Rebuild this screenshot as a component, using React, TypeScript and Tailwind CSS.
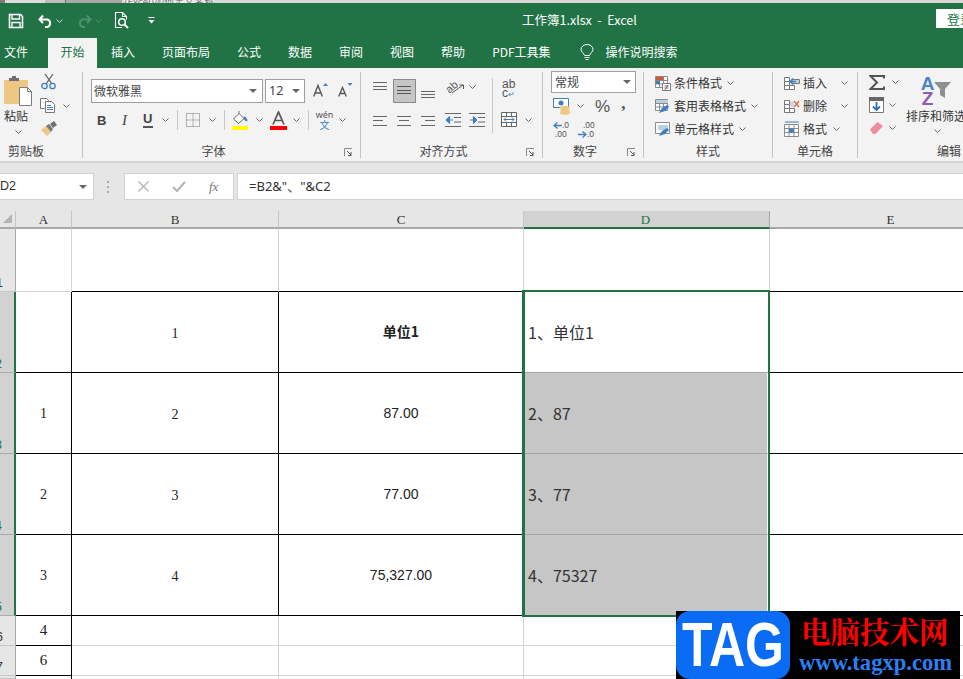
import React from "react";

const CJK = "font-['Noto_Sans_CJK_SC','Noto_Sans',sans-serif]";

function Chev({ className = "", color = "#666" }: { className?: string; color?: string }) {
  return (
    <svg width="7" height="4" viewBox="0 0 7 4" className={"shrink-0 " + className}>
      <path d="M.5.5 3.5 3.5 6.5.5" fill="none" stroke={color} strokeWidth="1" />
    </svg>
  );
}

function Tri({ className = "" }: { className?: string }) {
  return (
    <svg width="8" height="4" viewBox="0 0 8 4" className={"shrink-0 " + className}>
      <path d="M0 0h8L4 4z" fill="#666" />
    </svg>
  );
}

function Launcher() {
  return (
    <svg width="9" height="9" viewBox="0 0 9 9" className="shrink-0">
      <path d="M.5 8V.5H8" fill="none" stroke="#888" />
      <path d="M3 3l4 4M7 4v3.500H4" fill="none" stroke="#555" />
    </svg>
  );
}

function Lines({ rows, w = 15, h = 16, box = false, className = "" }: { rows: number[][]; w?: number; h?: number; box?: boolean; className?: string }) {
  return (
    <svg width={w} height={h} viewBox={`0 0 ${w} ${h}`} className={"shrink-0 " + className}>
      {rows.map((r, i) => (
        <path key={i} d={`M${r[0]} ${r[2]}.5H${r[1]}`} stroke={box ? "#555" : "#666"} />
      ))}
    </svg>
  );
}

function Sep() {
  return <div className="w-px h-[86px] mt-[4px] bg-[#c2c2c2] shrink-0" />;
}

function Group({ w, label, pad = "", launcher = false, children }: { w: string; label: string; pad?: string; launcher?: boolean; children: React.ReactNode }) {
  return (
    <div className={"flex flex-col shrink-0 overflow-hidden " + w}>
      <div className="h-[74px]">{children}</div>
      <div className="flex h-[18px] items-center text-[12px] leading-none text-[#444]">
        <div className={"flex-1 text-center whitespace-nowrap " + pad}>{label}</div>
        {launcher && (
          <div className="w-[16px] mt-[3px] flex">
            <Launcher />
          </div>
        )}
      </div>
    </div>
  );
}

function TabItem({ children, ml = "" }: { children: React.ReactNode; ml?: string }) {
  return <div className={"whitespace-nowrap " + ml}>{children}</div>;
}

function GridIcon({ children, w = 16, h = 16 }: { children?: React.ReactNode; w?: number; h?: number }) {
  return (
    <svg width={w} height={h} viewBox="0 0 16 16" className="shrink-0">
      {children}
    </svg>
  );
}

function StyleRow({ icon, text, gap = "ml-[3px]", chev = "ml-[5px]" }: { icon: React.ReactNode; text: string; gap?: string; chev?: string }) {
  return (
    <div className="flex items-center h-[23px]">
      {icon}
      <span className={"text-[12px] leading-none whitespace-nowrap text-[#333] " + gap}>{text}</span>
      <Chev className={chev} />
    </div>
  );
}

const tableLines = (
  <path d="M.5 1.500h12v11h-12zM.5 5.500h12M.5 9h12M4.500 1.500v11M8.500 1.500v11" fill="#fff" stroke="#8a8a8a" />
);

function TopStrip() {
  return (
    <div className="h-[3px] bg-[#d9d9d9] shrink-0 flex overflow-hidden">
      <div className="w-[5px] bg-[#7a7a7a]" />
      <div className="w-[40px] bg-[#dcdcdc]" />
      <div className="w-[20px] bg-[#bdbdbd]" />
      <div className="w-px bg-[#5f7f78]" />
      <div className="w-[56px] bg-[#a9a9a9]" />
      <div className="w-[90px] ml-[2px] bg-[#ececec] flex items-start overflow-hidden">
        <span className="text-[10px] leading-[3px] text-[#777] whitespace-nowrap">{"{Excel}如何定义名称"}</span>
      </div>
    </div>
  );
}

function TopBar() {
  return (
    <div className="h-[35px] flex items-center shrink-0 text-white">
      <svg width="16" height="16" viewBox="0 0 16 16" className="ml-[8px] shrink-0">
        <path d="M1.500 1.500h11l2 2v11h-13z" fill="none" stroke="#fff" strokeWidth="1.600" />
        <path d="M4 1.500v4.500h7.500v-4.500M4 14.500v-5h8v5" fill="none" stroke="#fff" strokeWidth="1.400" />
      </svg>
      <svg width="15" height="14" viewBox="0 0 15 14" className="ml-[14px] shrink-0">
        <path d="M1.500 5.500h8a4 4 0 0 1 0 7.500H7M5 1.500 1.500 5.500 5 9" fill="none" stroke="#fff" strokeWidth="2" />
      </svg>
      <Chev className="ml-[3px]" color="#cfe3d8" />
      <svg width="15" height="14" viewBox="0 0 15 14" className="ml-[14px] shrink-0">
        <path d="M13.500 5.500h-8a4 4 0 0 0 0 7.500H8M10 1.500 13.500 5.500 10 9" fill="none" stroke="#4d9170" strokeWidth="2" />
      </svg>
      <Chev className="ml-[3px]" color="#4d9170" />
      <svg width="16" height="17" viewBox="0 0 16 17" className="ml-[12px] shrink-0">
        <path d="M8 15.500H1.500V.500h7l4 4v3M8.500.500v4h4" fill="none" stroke="#fff" strokeWidth="1.100" />
        <circle cx="8" cy="10" r="3.300" fill="none" stroke="#fff" strokeWidth="1.500" />
        <path d="M10.500 12.500 14 16" stroke="#fff" strokeWidth="1.800" />
      </svg>
      <svg width="7" height="7" viewBox="0 0 7 7" className="ml-[18px] shrink-0">
        <path d="M.5 .5h6" stroke="#fff" />
        <path d="M.5 3h6L3.500 6.500z" fill="#fff" />
      </svg>
      <div className={"ml-[367px] text-[12.500px] leading-none whitespace-pre " + CJK}>工作簿1.xlsx  -  Excel</div>
      <div className="ml-auto w-[27px] h-[19px] bg-white overflow-hidden pl-[11px] text-[13px] leading-[19px] whitespace-nowrap text-[#217346] mb-[5px]">登录</div>
    </div>
  );
}

function Tabs() {
  return (
    <div className="h-[30px] flex items-start leading-[27px] text-[12px] text-white shrink-0">
      <TabItem ml="ml-[4px]">文件</TabItem>
      <div className="ml-[20px] w-[49px] h-[30px] bg-[#f3f3f3] text-[#217346] text-center">开始</div>
      <TabItem ml="ml-[14px]">插入</TabItem>
      <TabItem ml="ml-[27px]">页面布局</TabItem>
      <TabItem ml="ml-[27px]">公式</TabItem>
      <TabItem ml="ml-[27px]">数据</TabItem>
      <TabItem ml="ml-[27px]">审阅</TabItem>
      <TabItem ml="ml-[27px]">视图</TabItem>
      <TabItem ml="ml-[27px]">帮助</TabItem>
      <TabItem ml="ml-[27px]">PDF工具集</TabItem>
      <svg width="14" height="17" viewBox="0 0 14 17" className="ml-[29px] mt-[6px] shrink-0">
        <path d="M4.500 11.500C4 9 1 8 1 5.500a6 5 0 0 1 12 0C13 8 10 9 9.500 11.500zM4.500 13.500h5M5.500 15.500h3" fill="none" stroke="#fff" />
      </svg>
      <TabItem ml="ml-[12px]">操作说明搜索</TabItem>
    </div>
  );
}

function Clipboard() {
  return (
    <Group w="w-[82px]" label="剪贴板" pad="pl-[8px] pr-[38px]">
      <div className="flex">
        <div className="w-[40px] flex flex-col pl-[4px] shrink-0">
          <svg width="29" height="30" viewBox="0 0 29 30" className="mt-[8px]">
            <rect x="0" y="4" width="24" height="24" rx="1" fill="#eec883" />
            <path d="M5 5V2h3V0h4v2h3v3z" fill="#6f6f6f" />
            <path d="M15.500 11.500h8l4 4v14h-12z" fill="#fff" stroke="#7d7d7d" />
            <path d="M23.500 11.500v4h4" fill="none" stroke="#7d7d7d" />
          </svg>
          <div className="text-[12px] leading-none mt-[4px] text-[#333] whitespace-nowrap">粘贴</div>
          <Chev className="ml-[11px] mt-[8px]" />
        </div>
        <div className="flex flex-col pt-[6px]">
          <svg width="16" height="16" viewBox="0 0 16 16" className="ml-px">
            <path d="M4 0l7 10M12 0 5 10" stroke="#666" strokeWidth="1.300" />
            <circle cx="3.500" cy="12" r="2.700" fill="none" stroke="#3f7fbf" strokeWidth="1.300" />
            <circle cx="11.500" cy="12" r="2.700" fill="none" stroke="#3f7fbf" strokeWidth="1.300" />
          </svg>
          <div className="flex items-center mt-[8px]">
            <svg width="16" height="15" viewBox="0 0 16 15">
              <path d="M.5.500h6l2 2v2M.5.500v10h4" fill="#fff" stroke="#777" />
              <path d="M5.500 3.500h6l3 3v8h-9z" fill="#fff" stroke="#777" />
              <path d="M7 7.500h4M7 9.500h6M7 11.500h6" stroke="#4a7fb5" />
            </svg>
            <Chev className="ml-[7px]" />
          </div>
          <svg width="17" height="15" viewBox="0 0 17 15" className="mt-[8px]">
            <path d="M1 9l5-4 5 6-4 4z" fill="#eec883" />
            <path d="M6 5l3-2 4 5-2 3z" fill="#777" />
            <path d="M10 3l4-3 3 4-4 3z" fill="#6f6f6f" />
          </svg>
        </div>
      </div>
    </Group>
  );
}

function FontGroup() {
  return (
    <Group w="w-[277px]" label="字体" launcher>
      <div className="flex pt-[11px] pl-[8px]">
        <div className="w-[172px] h-[24px] bg-white border border-[#9f9f9f] flex items-center pl-[2px] pr-[5px] text-[12px] text-[#444]">
          <span className="flex-1">微软雅黑</span>
          <Tri />
        </div>
        <div className="ml-[2px] w-[40px] h-[24px] bg-white border border-[#9f9f9f] flex items-center pl-[3px] pr-[4px] text-[12.500px] text-[#444]">
          <span className={"flex-1 font-['Noto_Sans',sans-serif]"}>12</span>
          <Tri />
        </div>
        <svg width="16" height="14" viewBox="0 0 16 14" className="ml-[8px] mt-[4px] shrink-0">
          <path d="M.7 13.500 5 2.500l4.300 11M2.500 10h5" fill="none" stroke="#555" strokeWidth="1.400" />
          <path d="M10 3l2.500-3L15 3z" fill="#4a7fb5" />
        </svg>
        <svg width="16" height="14" viewBox="0 0 16 14" className="ml-[8px] mt-[4px] shrink-0">
          <path d="M1.700 13.500 5.500 4.500l3.800 9M3 10.500h5" fill="none" stroke="#555" strokeWidth="1.300" />
          <path d="M10.500 0l2.500 3 2.500-3z" fill="#4a7fb5" />
        </svg>
      </div>
      <div className="flex items-center h-[20px] mt-[7px] text-[#444]">
        <span className="ml-[14px] w-[10px] font-['Liberation_Sans',sans-serif] font-bold text-[13px] leading-none">B</span>
        <span className="ml-[15px] w-[8px] font-['Liberation_Serif',serif] italic text-[15px] leading-none">I</span>
        <span className="ml-[13px] w-[10px] font-['Liberation_Sans',sans-serif] font-bold text-[13px] leading-[14px] border-b-2 border-[#555] h-[16px]">U</span>
        <Chev className="ml-[9px]" />
        <div className="ml-[8px] w-px h-[20px] bg-[#c6c6c6]" />
        <svg width="14" height="14" viewBox="0 0 14 14" className="ml-[8px] shrink-0">
          <path d="M.5.500h13v13H.5zM7 .5v13M.5 7h13" fill="none" stroke="#777" strokeDasharray="1 1" />
        </svg>
        <Chev className="ml-[9px]" />
        <div className="ml-[8px] w-px h-[20px] bg-[#c6c6c6]" />
        <svg width="17" height="19" viewBox="0 0 17 19" className="ml-[7px] shrink-0">
          <path d="M1.500 8 7 2.500l5 5-5.500 5z" fill="#fff" stroke="#666" />
          <path d="M7 2.500V0M12 6c2 0 3 2 3 4-2 0-3-2-3-4z" fill="#4a7fb5" stroke="#4a7fb5" />
          <rect x="0" y="15" width="16" height="4" fill="#ffff00" />
        </svg>
        <Chev className="ml-[7px]" />
        <svg width="17" height="19" viewBox="0 0 17 19" className="ml-[7px] shrink-0">
          <path d="M3 13.500 8.500 1l5.500 12.500M5 9.500h7" fill="none" stroke="#555" strokeWidth="1.700" />
          <rect x="0" y="15" width="17" height="4" fill="#ff0000" />
        </svg>
        <Chev className="ml-[6px]" />
        <div className="ml-[8px] w-px h-[20px] bg-[#c6c6c6]" />
        <div className="ml-[8px] w-[15px] flex flex-col items-center leading-none">
          <span className="text-[9px] leading-[10px] text-[#555] font-['Noto_Sans',sans-serif]">wén</span>
          <span className="text-[10px] leading-[10px] text-[#3f7fbf]">文</span>
        </div>
        <Chev className="ml-[7px]" />
      </div>
    </Group>
  );
}

function AlignGroup() {
  return (
    <Group w="w-[181px]" label="对齐方式" launcher>
      <div className="flex">
        <div className="w-[131px] shrink-0 pl-[12px] pt-[11px]">
          <div className="flex items-center h-[24px]">
            <Lines rows={[[0, 14, 3], [0, 14, 7], [0, 14, 10]]} h={24} />
            <div className="ml-[5px] w-[23px] h-[24px] bg-[#c6c6c6] border border-[#8a8a8a] flex items-center justify-center shrink-0">
              <Lines rows={[[0, 14, 3], [0, 14, 7], [0, 14, 10]]} box />
            </div>
            <Lines rows={[[0, 14, 12], [0, 14, 15], [0, 14, 18]]} h={24} className="ml-[5px]" />
            <svg width="25" height="16" viewBox="0 0 25 16" className="ml-[10px] mb-[8px] mt-[-3px] shrink-0">
              <text x="1" y="13" fontSize="11" fill="#555" transform="rotate(-42 6 11)" fontFamily="Liberation Sans">ab</text>
              <path d="M6 15 17 7M13.500 7H17.500V11" fill="none" stroke="#555" />
            </svg>
            <Chev className="ml-[-2px] mb-[8px]" />
          </div>
          <div className="flex items-center h-[16px] mt-[9px]">
            <Lines rows={[[0, 14, 4], [0, 10, 8], [0, 14, 13]]} />
            <Lines rows={[[0, 14, 4], [2, 12, 8], [0, 14, 13]]} className="ml-[9px]" />
            <Lines rows={[[0, 14, 4], [4, 14, 8], [0, 14, 13]]} className="ml-[9px]" />
            <svg width="17" height="14" viewBox="0 0 17 14" className="ml-[9px] shrink-0">
              <path d="M0 .5h16M9 4.500h7M9 9h7M0 13.500h16" stroke="#666" />
              <path d="M8 7H2M4.500 3.500 1 7l3.500 3.500z" fill="#3f7fbf" stroke="#3f7fbf" />
            </svg>
            <svg width="17" height="14" viewBox="0 0 17 14" className="ml-[7px] shrink-0">
              <path d="M0 .5h16M9 4.500h7M9 9h7M0 13.500h16" stroke="#666" />
              <path d="M1 7h6M4.500 3.500 8 7l-3.500 3.500z" fill="#3f7fbf" stroke="#3f7fbf" />
            </svg>
          </div>
        </div>
        <div className="w-px h-[55px] mt-[10px] bg-[#c6c6c6] shrink-0" />
        <div className="flex flex-col pl-[8px] pt-[12px]">
          <div className="flex flex-col ml-[1px] h-[20px] text-[#555] font-['Liberation_Sans',sans-serif] text-[12px]">
            <span className="leading-[9px]">ab</span>
            <span className="leading-[9px]">
              c<span className="text-[#3f7fbf] text-[8px]">↵</span>
            </span>
          </div>
          <div className="flex items-center mt-[12px]">
            <svg width="16" height="15" viewBox="0 0 16 15" className="shrink-0">
              <path d="M.5.500h15v14H.5zM.5 4.500h15M.5 10.500h15M5.500.5v4M10.500.5v4M5.500 10.500v4M10.500 10.500v4" fill="#fff" stroke="#666" />
              <path d="M3 7.500h10M5 5.500l-2 2 2 2M11 5.500l2 2-2 2" fill="none" stroke="#3f7fbf" />
            </svg>
            <Chev className="ml-[8px]" />
          </div>
        </div>
      </div>
    </Group>
  );
}

function NumberGroup() {
  return (
    <Group w="w-[100px]" label="数字" launcher>
      <div className="ml-[8px] mt-[3px] w-[85px] h-[22px] bg-white border border-[#9f9f9f] flex items-center pl-[3px] pr-[4px] text-[12px] text-[#444]">
        <span className="flex-1">常规</span>
        <Tri />
      </div>
      <div className="flex items-center h-[20px] mt-[3px] ml-[10px]">
        <svg width="18" height="17" viewBox="0 0 18 17" className="shrink-0">
          <path d="M.5.500h15v9H.5z" fill="#fff" stroke="#3f7fbf" />
          <circle cx="8" cy="5" r="2.500" fill="#3f7fbf" />
          <ellipse cx="12" cy="9.500" rx="5" ry="1.800" fill="#eec883" />
          <ellipse cx="12" cy="12.500" rx="5" ry="1.800" fill="#eec883" />
          <ellipse cx="12" cy="15" rx="5" ry="1.800" fill="#eec883" />
        </svg>
        <Chev className="ml-[6px]" />
        <span className="ml-[11px] text-[17px] leading-none text-[#555] font-['Liberation_Sans',sans-serif]">%</span>
        <span className="ml-[11px] text-[17px] font-bold leading-none text-[#555] font-['Liberation_Serif',serif] mt-[-5px]">,</span>
      </div>
      <div className="flex items-center mt-[5px] ml-[10px] text-[8.500px] leading-[8px] text-[#555] font-['Liberation_Sans',sans-serif]">
        <div className="w-[18px]">
          <div className="flex items-center">
            <svg width="9" height="7" viewBox="0 0 9 7"><path d="M9 3.500H2M4.500.5 1 3.500l3.500 3" fill="none" stroke="#3f7fbf" strokeWidth="1.300" /></svg>.0
          </div>
          <div className="pl-[2px] mt-[1px]">.00</div>
        </div>
        <div className="w-[18px] ml-[7px]">
          <div className="pl-[5px]">.00</div>
          <div className="flex items-center mt-[1px]">
            <svg width="9" height="7" viewBox="0 0 9 7"><path d="M0 3.500h7M4.500.5 8 3.500l-3.500 3" fill="none" stroke="#3f7fbf" strokeWidth="1.300" /></svg>.0
          </div>
        </div>
      </div>
    </Group>
  );
}

function StylesGroup() {
  return (
    <Group w="w-[128px]" label="样式">
      <div className="pl-[11px] pt-[3px]">
        <StyleRow
          icon={
            <GridIcon>
              {tableLines}
              <path d="M1 2h7v3H1z" fill="#d9542c" />
              <path d="M1 6h4v3H1z" fill="#3f7fbf" />
              <path d="M7.500 8.500h8v7h-8z" fill="#fff" stroke="#777" />
              <path d="M9.500 11h4M9.500 13h4M10 15l3-5" stroke="#555" strokeWidth=".8" />
            </GridIcon>
          }
          text="条件格式"
        />
        <StyleRow
          icon={
            <GridIcon>
              {tableLines}
              <path d="M1 2h12v3H1z" fill="#bcd0e3" />
              <path d="M4 15l3-5 5-3 2 2-4 4z" fill="#3f7fbf" />
            </GridIcon>
          }
          text="套用表格格式"
        />
        <StyleRow
          icon={
            <GridIcon>
              <path d="M.5 1.500h14v11H.5z" fill="#fff" stroke="#8a8a8a" />
              <path d="M3 4h10v5H3z" fill="#bcd0e3" />
              <path d="M4 15l3-5 5-3 2 2-4 4z" fill="#3f7fbf" />
            </GridIcon>
          }
          text="单元格样式"
        />
      </div>
    </Group>
  );
}

function CellsGroup() {
  const grid = "M.5 2.500h5v4h-5zM.5 6.500h5v4h-5zM.5 10.500h5v4h-5zM5.500 10.500h5v4h-5z";
  return (
    <Group w="w-[84px]" label="单元格">
      <div className="pl-[11px] pt-[3px]">
        <StyleRow
          icon={
            <GridIcon>
              <path d={grid} fill="#fff" stroke="#777" />
              <path d="M8 4.500h7.500v4H8z" fill="#bcd0e3" stroke="#777" />
              <path d="M12 6.500H6.500M9 3.500l-3 3 3 3" fill="none" stroke="#3f7fbf" strokeWidth="1.300" />
            </GridIcon>
          }
          text="插入"
          chev="ml-[14px]"
        />
        <StyleRow
          icon={
            <GridIcon>
              <path d={grid} fill="#fff" stroke="#777" />
              <path d="M6.500 3.500h3v5h-3z" fill="#bcd0e3" />
              <path d="M10 3l5 6M15 3l-5 6" stroke="#e2704f" strokeWidth="1.500" />
            </GridIcon>
          }
          text="删除"
          chev="ml-[14px]"
        />
        <StyleRow
          icon={
            <GridIcon>
              <path d="M.5 3.500h14v12H.5zM.5 7.500h14M.5 11.500h14M5 3.500v12M10 3.500v12" fill="#fff" stroke="#8a8a8a" />
              <path d="M5 7.500h5v4H5z" fill="#3f7fbf" />
              <path d="M1 1h14" stroke="#3f7fbf" strokeWidth="1" />
            </GridIcon>
          }
          text="格式"
          chev="ml-[6px]"
        />
      </div>
    </Group>
  );
}

function EditGroup() {
  return (
    <div className="flex flex-col flex-1 overflow-hidden">
      <div className="h-[74px] flex">
        <div className="flex flex-col pl-[11px] pt-[6px] w-[48px] shrink-0">
          <div className="flex items-center h-[16px]">
            <svg width="16" height="15" viewBox="0 0 16 15" className="shrink-0">
              <path d="M15 3.500V1H1.500L8 7.500 1.500 14H15v-2.500" fill="none" stroke="#555" strokeWidth="2" />
            </svg>
            <Chev className="ml-[7px]" />
          </div>
          <div className="flex items-center h-[16px] mt-[7px]">
            <svg width="15" height="16" viewBox="0 0 15 16" className="shrink-0">
              <path d="M.5.500h14v15H.5z" fill="#fff" stroke="#777" />
              <path d="M0 0h15v4H0z" fill="#666" />
              <path d="M7.500 5v8M4 9.500l3.500 3.500L11 9.500" fill="none" stroke="#2d6fb0" strokeWidth="1.800" />
            </svg>
            <Chev className="ml-[5px]" />
          </div>
          <div className="flex items-center h-[16px] mt-[7px]">
            <svg width="15" height="14" viewBox="0 0 15 14" className="shrink-0">
              <path d="M1 8.500 8.500 1 14 5l-7.500 8H4z" fill="#ee8d9c" />
            </svg>
            <Chev className="ml-[5px]" />
          </div>
        </div>
        <div className="flex flex-col w-[60px] shrink-0 overflow-hidden">
          <div className="flex mt-[8px] pl-[15px] h-[30px]">
            <div className="flex flex-col items-center font-['Liberation_Sans',sans-serif] font-bold text-[19px] leading-[15px] w-[13px]">
              <span className="text-[#4a86c5]">A</span>
              <span className="text-[#8e5cb5]">Z</span>
            </div>
            <svg width="17" height="17" viewBox="0 0 17 17" className="mt-[6px] shrink-0">
              <path d="M0 0h17l-6 7v9l-5-3V7z" fill="#8f8f8f" />
            </svg>
          </div>
          <div className="text-[12px] leading-none mt-[4px] whitespace-nowrap text-[#333]">排序和筛选</div>
          <Chev className="ml-[28px] mt-[7px]" />
        </div>
      </div>
      <div className="flex h-[18px] items-center text-[12px] leading-none text-[#444] pl-[79px] whitespace-nowrap">编辑</div>
    </div>
  );
}

function Ribbon() {
  return (
    <div className="h-[95px] bg-[#f3f3f3] border-b-2 border-[#d4d4d4] flex shrink-0">
      <Clipboard />
      <Sep />
      <FontGroup />
      <Sep />
      <AlignGroup />
      <Sep />
      <NumberGroup />
      <Sep />
      <StylesGroup />
      <Sep />
      <CellsGroup />
      <Sep />
      <EditGroup />
    </div>
  );
}

function FormulaBar() {
  return (
    <div className="h-[48px] bg-[#e6e6e6] flex shrink-0 pt-[10px]">
      <div className="w-[94px] h-[27px] bg-white border border-l-0 border-[#d2d2d2] flex items-center pr-[6px] font-['Liberation_Sans',sans-serif] text-[12.500px] text-[#333]">
        <span className="flex-1 whitespace-nowrap">D2</span>
        <Tri />
      </div>
      <div className="ml-[13px] w-[3px] h-[27px] flex flex-col justify-center gap-[3px] mr-[14px]">
        <div className="w-[2px] h-[2px] bg-[#aaa]" />
        <div className="w-[2px] h-[2px] bg-[#aaa]" />
        <div className="w-[2px] h-[2px] bg-[#aaa]" />
      </div>
      <div className="w-[110px] h-[27px] bg-white border border-[#d2d2d2] flex items-center pl-[13px]">
        <svg width="11" height="11" viewBox="0 0 11 11" className="shrink-0">
          <path d="M.5.500l10 10M10.500.5l-10 10" stroke="#b4b4b4" strokeWidth="1.400" />
        </svg>
        <svg width="14" height="11" viewBox="0 0 14 11" className="ml-[23px] shrink-0">
          <path d="M1 6l4 4 8-9" fill="none" stroke="#b4b4b4" strokeWidth="2" />
        </svg>
        <span className="ml-[23px] font-['Liberation_Serif',serif] italic text-[13px] leading-none text-[#777]">fx</span>
      </div>
      <div className="ml-[3px] flex-1 h-[27px] bg-white border border-r-0 border-[#d2d2d2] flex items-center pl-[11px] text-[13px] text-[#333] font-['Noto_Sans','Noto_Sans_CJK_SC',sans-serif] whitespace-nowrap">
        =B2&amp;"、"&amp;C2
      </div>
    </div>
  );
}

function Head({ children, sel = false, last = false }: { children?: React.ReactNode; sel?: boolean; last?: boolean }) {
  return (
    <div
      className={
        "flex items-center justify-center text-[13px] font-['Liberation_Serif',serif] leading-none " +
        (sel
          ? "bg-[#d2d2d2] text-[#217346] border-b-2 border-b-[#217346] border-r border-r-[#a8a8a8] pr-[2px]"
          : "bg-[#e6e6e6] text-[#333] border-b-2 border-b-[#a8a8a8] " + (last ? "" : "border-r border-r-[#c6c6c6]"))
      }
    >
      {children}
    </div>
  );
}

function RowHead({ n, sel = false }: { n: number; sel?: boolean }) {
  return (
    <div
      className={
        "flex items-end justify-end pr-[12px] overflow-hidden text-[13px] leading-[16px] font-['Liberation_Sans',sans-serif] " +
        (sel
          ? "bg-[#d2d2d2] text-[#217346] border-r-2 border-r-[#217346] border-b border-b-[#ababab]"
          : "bg-[#e6e6e6] text-[#333] border-r border-r-[#a8a8a8] border-b border-b-[#c6c6c6]")
      }
    >
      {n}
    </div>
  );
}

function Cell({ children, className = "" }: { children?: React.ReactNode; className?: string }) {
  return <div className={"flex items-center justify-center bg-white text-[#222] " + className}>{children}</div>;
}

const LL = "border-r border-b border-[#d4d4d4]";
const BB = "border-r border-b border-black";
const NUM = "font-['Liberation_Sans',sans-serif] text-[14px]";
const ANUM = "font-['Liberation_Serif',serif] text-[14px]";
const BNUM = "font-['Liberation_Serif',serif] text-[14px] pt-[2px]";
const DT = "!justify-start pl-[4px] pb-px text-[16px] text-[#333] " + CJK;
const DG = " !bg-[#c6c6c6] border-b border-b-[#a4a4a4] border-r-[3px] border-r-white";

function Sheet() {
  return (
    <div className="relative flex-1 overflow-hidden">
      <div className="grid h-full grid-cols-[16px_56px_207px_245px_246px_241px] grid-rows-[18px_63px_81px_81px_81px_81px_30px_30px_1fr]">
        <div className="bg-[#e6e6e6] border-b-2 border-b-[#a8a8a8] border-r border-r-[#c6c6c6] flex items-end justify-end pr-[3px] pb-[4px]">
          <svg width="9" height="9" viewBox="0 0 9 9"><path d="M9 0v9H0z" fill="#b4b4b4" /></svg>
        </div>
        <Head>A</Head>
        <Head>B</Head>
        <Head>C</Head>
        <Head sel>D</Head>
        <Head last>E</Head>

        <RowHead n={1} />
        <Cell className={LL} />
        <Cell className="border-r border-r-[#d4d4d4] border-b border-b-black" />
        <Cell className="border-r border-r-[#d4d4d4] border-b border-b-black" />
        <Cell className="border-r border-r-[#d4d4d4] border-b border-b-black" />
        <Cell className="border-b border-b-black" />

        <RowHead n={2} sel />
        <Cell className={BB} />
        <Cell className={BB + " " + BNUM}>1</Cell>
        <Cell className={BB + " font-bold text-[14px] pb-[2px] " + CJK}>单位1</Cell>
        <Cell className={DT + " border-b border-b-[#a4a4a4]"}>1、单位1</Cell>
        <Cell className="border-b border-b-black" />

        <RowHead n={3} sel />
        <Cell className={BB + " " + ANUM}>1</Cell>
        <Cell className={BB + " " + BNUM}>2</Cell>
        <Cell className={BB + " " + NUM}>87.00</Cell>
        <Cell className={DT + DG}>2、87</Cell>
        <Cell className="border-b border-b-black" />

        <RowHead n={4} sel />
        <Cell className={BB + " " + ANUM}>2</Cell>
        <Cell className={BB + " " + BNUM}>3</Cell>
        <Cell className={BB + " " + NUM}>77.00</Cell>
        <Cell className={DT + DG}>3、77</Cell>
        <Cell className="border-b border-b-black" />

        <RowHead n={5} sel />
        <Cell className={BB + " " + ANUM}>3</Cell>
        <Cell className={BB + " " + BNUM}>4</Cell>
        <Cell className={BB + " " + NUM}>75,327.00</Cell>
        <Cell className={DT + DG}>4、75327</Cell>
        <Cell className="border-b border-b-black" />

        <RowHead n={6} />
        <Cell className={BB + " " + ANUM + " text-[15px]"}>4</Cell>
        <Cell className={LL} />
        <Cell className={LL} />
        <Cell className={LL} />
        <Cell className="border-b border-b-[#d4d4d4]" />

        <RowHead n={7} />
        <Cell className={BB + " " + ANUM + " text-[15px]"}>6</Cell>
        <Cell className={LL} />
        <Cell className={LL} />
        <Cell className={LL} />
        <Cell className="border-b border-b-[#d4d4d4]" />

        <RowHead n={8} />
        <Cell className="border-r border-black" />
        <Cell className="border-r border-[#d4d4d4]" />
        <Cell className="border-r border-[#d4d4d4]" />
        <Cell className="border-r border-[#d4d4d4]" />
        <Cell />
      </div>
      <div className="absolute left-[522px] top-[79px] w-[248px] h-[327px] border-2 border-l-[3px] border-[#217346] pointer-events-none" />
      <div className="absolute right-[3px] bottom-0 w-[284px] h-[68px] bg-black flex overflow-hidden">
        <div className="w-[114px] h-[68px] rounded-[14px] bg-[#0a6cf5] flex items-center justify-center text-white font-['Liberation_Sans',sans-serif] font-bold text-[50px] leading-none shrink-0">
          <span className="scale-y-[1.25]">TAG</span>
        </div>
        <div className="flex flex-col ml-[11px]">
          <div className="text-[29.500px] leading-[30px] mt-[4px] font-bold text-[#ff0000] whitespace-nowrap font-['Noto_Serif_CJK_SC','Noto_Sans_CJK_SC',sans-serif]">电脑技术网</div>
          <div className="ml-[-2px] mt-[6px] font-['Liberation_Serif',serif] font-bold text-[22.600px] leading-[24px] text-[#2d7ff0] whitespace-nowrap">www.tagxp.com</div>
        </div>
      </div>
    </div>
  );
}

export default function App() {
  return (
    <div className={"w-screen h-screen overflow-hidden flex flex-col bg-white " + CJK}>
      <TopStrip />
      <div className="bg-[#217346] shrink-0">
        <TopBar />
        <Tabs />
      </div>
      <Ribbon />
      <FormulaBar />
      <Sheet />
    </div>
  );
}
